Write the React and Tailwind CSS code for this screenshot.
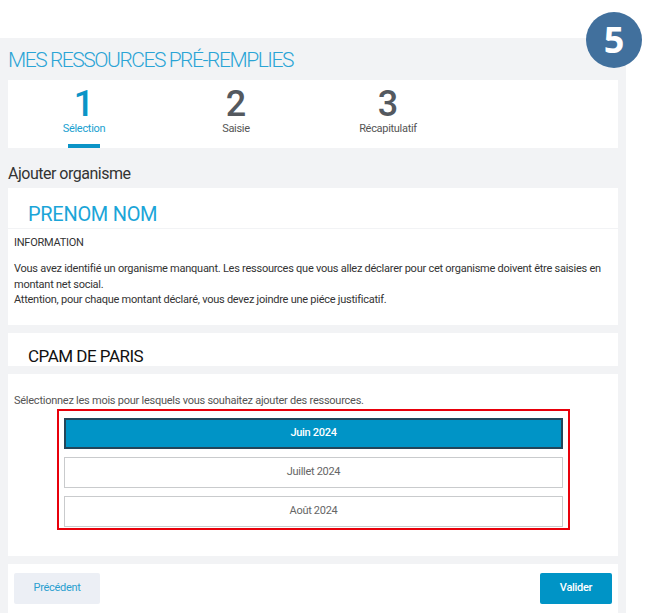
import React from "react";

const steps = [
  { n: "1", label: "Sélection", active: true },
  { n: "2", label: "Saisie" },
  { n: "3", label: "Récapitulatif" },
];

const months = [
  { label: "Juin 2024", selected: true },
  { label: "Juillet 2024" },
  { label: "Août 2024" },
];

export default function App() {
  return (
    <div className="relative w-[650px] h-[613px] overflow-hidden bg-white font-['Roboto',sans-serif]">
      <div className="pt-[38px] w-[626px]">
        <div className="bg-[#f2f3f5] px-2 pb-4">
          <h1 className="h-[42px] pt-[10px] text-[21px] leading-[24px] font-light text-[#2aa4d5] tracking-[-1.45px]">
            MES RESSOURCES PRÉ-REMPLIES
          </h1>

          {/* steps */}
          <div className="bg-white h-[68px] flex">
            {steps.map((s) => (
              <div key={s.n} className="w-[152px] h-full flex flex-col items-center">
                <span
                  className={`mt-[10px] text-[36px] leading-[28px] font-medium ${s.active ? "text-[#0b94c7]" : "text-[#54595f]"}`}
                >
                  {s.n}
                </span>
                <span
                  className={`mt-[4px] text-[11px] leading-[13px] tracking-[-0.3px] ${s.active ? "text-[#1a9fd0]" : "text-[#555]"}`}
                >
                  {s.label}
                </span>
                {s.active && <span className="block mt-auto w-[32px] h-[4px] bg-[#0b94c7]" />}
              </div>
            ))}
          </div>

          <h2 className="h-[40px] pt-[16px] text-[16px] leading-[20px] text-[#333] tracking-[-0.5px]">
            Ajouter organisme
          </h2>

          <div className="bg-white h-[40px] pl-5 pt-[15px]">
            <span className="text-[20px] leading-[22px] text-[#1ba5d8] tracking-[-0.3px]">PRENOM NOM</span>
          </div>
          <div className="h-px bg-[#f2f3f5]" />
          <div className="bg-white h-[96px] px-[6px] pt-[7px] text-[11px] text-[#333] tracking-[-0.25px]">
            <p className="leading-[14px] uppercase">Information</p>
            <p className="mt-[11px] leading-[15.5px]">
              Vous avez identifié un organisme manquant. Les ressources que vous allez déclarer pour cet organisme doivent être saisies en montant net social.
              <br />
              Attention, pour chaque montant déclaré, vous devez joindre une piéce justificatif.
            </p>
          </div>

          <div className="mt-2 bg-white h-[33px] pl-5 pt-[12px]">
            <span className="text-[17px] leading-[18px] text-[#111] tracking-[-0.5px]">CPAM DE PARIS</span>
          </div>

          <div className="mt-2 bg-white h-[182px] px-[6px] pt-[21px]">
            <p className="text-[11px] leading-[12px] text-[#555] tracking-[-0.25px]">
              Sélectionnez les mois pour lesquels vous souhaitez ajouter des ressources.
            </p>
            <div className="ml-[43px] mt-[2px] w-[513px] h-[121px] border-2 border-[#e8000b] px-[5px] pt-[7px] flex flex-col gap-[8px]">
              {months.map((m) =>
                m.selected ? (
                  <div
                    key={m.label}
                    className="h-[31px] bg-[#0094c6] border-2 border-[#23465a] flex items-center justify-center text-[11px] font-medium text-white tracking-[-0.3px]"
                  >
                    {m.label}
                  </div>
                ) : (
                  <div
                    key={m.label}
                    className="h-[31px] bg-white border border-[#c9cbcd] flex items-center justify-center text-[11px] text-[#666] tracking-[-0.3px]"
                  >
                    {m.label}
                  </div>
                )
              )}
            </div>
          </div>

          <div className="mt-2 bg-white h-[60px] px-[6px] pt-[9px] flex justify-between items-start">
            <button className="w-[86px] h-[31px] bg-[#eceff5] rounded-[2px] text-[11px] text-[#2a9fd0] tracking-[-0.3px]">
              Précédent
            </button>
            <button className="w-[72px] h-[31px] bg-[#0094c6] rounded-[2px] text-[11px] font-medium text-white tracking-[-0.3px]">
              Valider
            </button>
          </div>
        </div>
      </div>

      <div className="absolute left-[586px] top-[12px] w-[56px] h-[56px] rounded-full bg-[#41709d] flex items-center justify-center">
        <span className="text-[36px] leading-none font-bold text-white font-['Open_Sans',sans-serif]">5</span>
      </div>
    </div>
  );
}
